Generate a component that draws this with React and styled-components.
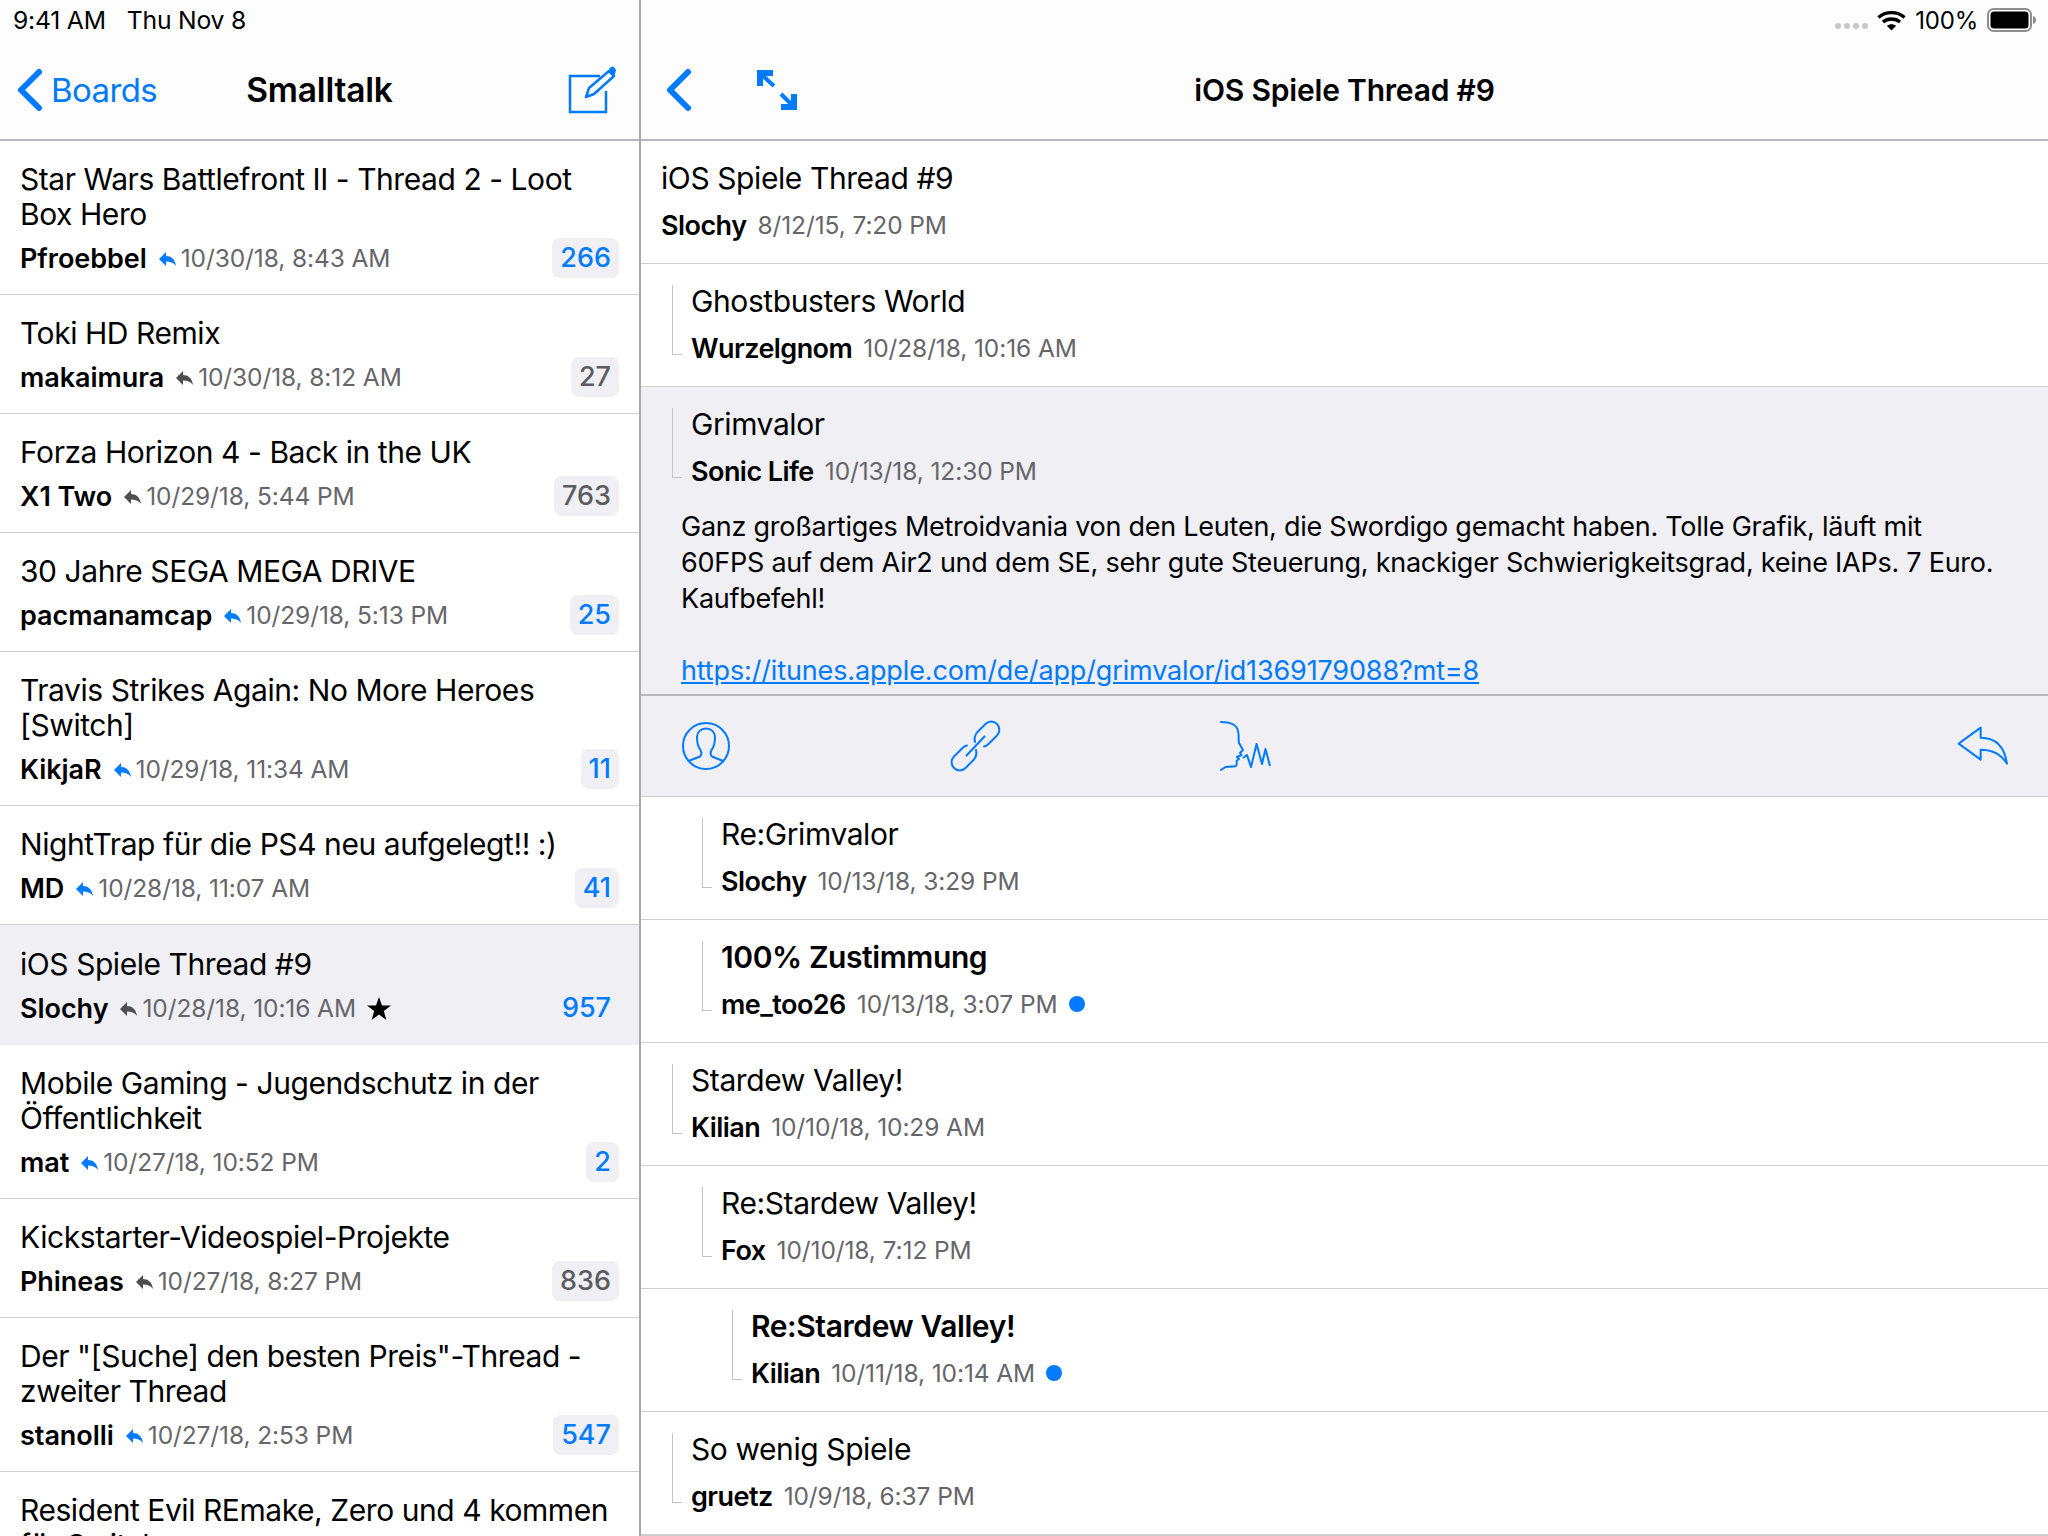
import styled, { createGlobalStyle } from "styled-components";

const BLUE = "#007aff";
const TINT = "#efeff4";
const LINE = "#c4c4c8";

const threads = [
  { title: "Star Wars Battlefront II - Thread 2 - Loot Box Hero", author: "Pfroebbel", date: "10/30/18, 8:43 AM", count: 266, unread: true },
  { title: "Toki HD Remix", author: "makaimura", date: "10/30/18, 8:12 AM", count: 27 },
  { title: "Forza Horizon 4 - Back in the UK", author: "X1 Two", date: "10/29/18, 5:44 PM", count: 763 },
  { title: "30 Jahre SEGA MEGA DRIVE", author: "pacmanamcap", date: "10/29/18, 5:13 PM", count: 25, unread: true },
  { title: "Travis Strikes Again: No More Heroes [Switch]", author: "KikjaR", date: "10/29/18, 11:34 AM", count: 11, unread: true },
  { title: "NightTrap für die PS4 neu aufgelegt!! :)", author: "MD", date: "10/28/18, 11:07 AM", count: 41, unread: true },
  { title: "iOS Spiele Thread #9", author: "Slochy", date: "10/28/18, 10:16 AM", count: 957, unread: true, active: true, starred: true },
  { title: "Mobile Gaming - Jugendschutz in der Öffentlichkeit", author: "mat", date: "10/27/18, 10:52 PM", count: 2, unread: true },
  { title: "Kickstarter-Videospiel-Projekte", author: "Phineas", date: "10/27/18, 8:27 PM", count: 836 },
  { title: 'Der "[Suche] den besten Preis"-Thread - zweiter Thread', author: "stanolli", date: "10/27/18, 2:53 PM", count: 547, unread: true },
  { title: "Resident Evil REmake, Zero und 4 kommen für Switch", author: "Oli", date: "10/27/18, 1:12 PM", count: 12 },
];

const postsAfter = [
  { title: "Re:Grimvalor", author: "Slochy", date: "10/13/18, 3:29 PM", level: 2 },
  { title: "100% Zustimmung", author: "me_too26", date: "10/13/18, 3:07 PM", level: 2, fresh: true },
  { title: "Stardew Valley!", author: "Kilian", date: "10/10/18, 10:29 AM", level: 1 },
  { title: "Re:Stardew Valley!", author: "Fox", date: "10/10/18, 7:12 PM", level: 2 },
  { title: "Re:Stardew Valley!", author: "Kilian", date: "10/11/18, 10:14 AM", level: 3, fresh: true },
  { title: "So wenig Spiele", author: "gruetz", date: "10/9/18, 6:37 PM", level: 1 },
];

const GlobalStyle = createGlobalStyle`
  html, body {
    margin: 0;
    background: #fff;
  }
  body {
    font-family: Inter, "Liberation Sans", sans-serif;
    color: #000;
  }
`;

const Screen = styled.div`
  display: grid;
  grid-template-columns: 640px 1fr;
  width: 2048px;
  height: 1536px;
  overflow: hidden;
`;

const Sidebar = styled.aside`
  border-right: 2px solid #a9a9ad;
  height: 1536px;
  overflow: hidden;
  box-sizing: content-box;
  width: 639px;
`;

const Detail = styled.main`
  height: 1536px;
  overflow: hidden;
  margin-left: 1px;
`;

const Header = styled.header`
  height: 139px;
  border-bottom: 2px solid #b8b8bc;
  background: #fdfdfd;
`;

const StatusBar = styled.div`
  display: flex;
  align-items: center;
  justify-content: ${(props) => (props.end ? "flex-end" : "flex-start")};
  gap: 21px;
  height: 40px;
  padding: 0 11px 0 13px;
  font-size: 24.7px;
  letter-spacing: -0.2px;
`;

const StatusRight = styled.div`
  display: flex;
  align-items: center;
  gap: 9px;
  font-size: 24px;
`;

const SignalDots = styled.div`
  display: flex;
  gap: 3px;
  margin: 12px 0 0;
  span {
    width: 6px;
    height: 6px;
    border-radius: 50%;
    background: #c8c8c8;
  }
`;

const NavBar = styled.div`
  display: grid;
  grid-template-columns: 1fr auto 1fr;
  align-items: center;
  height: 99px;
  padding: ${(props) => props.padding};
`;

const NavTitle = styled.div`
  font-size: ${(props) => props.size}px;
  font-weight: 600;
  letter-spacing: -0.2px;
`;

const NavGroup = styled.div`
  display: flex;
  align-items: center;
  gap: ${(props) => props.gap || 0}px;
  justify-content: ${(props) => (props.end ? "flex-end" : "flex-start")};
  padding-right: ${(props) => (props.end ? 5 : 0)}px;
`;

const BackLabel = styled.span`
  color: ${BLUE};
  font-size: 33px;
  letter-spacing: -0.6px;
`;

const ThreadRow = styled.div`
  padding: ${(props) => (props.active ? 22 : 21)}px 20px 16px 20px;
  border-bottom: 2px solid ${(props) => (props.active ? TINT : "#cfcfd3")};
  background: ${(props) => (props.active ? TINT : "#fff")};
  margin-top: ${(props) => (props.active ? -1 : 0)}px;
  margin-bottom: -1px;
`;

const ThreadTitle = styled.div`
  font-size: 30px;
  line-height: 35px;
  letter-spacing: -0.44px;
`;

const MetaRow = styled.div`
  display: flex;
  align-items: center;
  margin-top: 6px;
  height: 40px;
`;

const Author = styled.span`
  font-size: 27px;
  font-weight: 600;
  letter-spacing: ${(props) => (props.tight ? -0.55 : -0.05)}px;
`;

const DateText = styled.span`
  font-size: 24.5px;
  color: #66666a;
  letter-spacing: -0.1px;
`;

const ReplyMark = styled.svg`
  width: 17px;
  height: 14px;
  margin: 2px 5px 0 12px;
  fill: ${(props) => (props.unread ? BLUE : "#4f4f52")};
`;

const Star = styled.svg`
  width: 24px;
  height: 23px;
  margin-left: 11px;
`;

const Badge = styled.span`
  margin-left: auto;
  min-width: 16px;
  height: 40px;
  line-height: 40px;
  padding: 0 8px;
  text-align: center;
  border-radius: 8px;
  font-size: 27px;
  font-weight: 500;
  background: ${(props) => (props.active ? "transparent" : TINT)};
  color: ${(props) => (props.unread ? BLUE : "#5c5c60")};
`;

const PostRow = styled.section`
  border-bottom: 2px solid #cfcfd3;
  background: ${(props) => (props.active ? TINT : "#fff")};
  margin-bottom: -1px;
`;

const PostHead = styled.div`
  display: flex;
  padding: 20px 20px 21px ${(props) => (props.level ? 1 + props.level * 30 : 20)}px;
`;

const Connector = styled.div`
  flex: none;
  width: 10px;
  height: 70px;
  margin: 1px 9px 0 0;
  border-left: 1px solid ${LINE};
  border-bottom: 1px solid ${LINE};
  box-sizing: border-box;
`;

const PostTitle = styled.div`
  font-size: 30px;
  line-height: 35px;
  font-weight: ${(props) => (props.fresh ? 600 : 400)};
  letter-spacing: -0.41px;
`;

const PostMeta = styled.div`
  display: flex;
  align-items: center;
  gap: 11px;
  height: 34px;
  margin-top: 12px;
`;

const FreshDot = styled.span`
  width: 16px;
  height: 16px;
  border-radius: 50%;
  background: ${BLUE};
`;

const PostBody = styled.div`
  padding: 0 40px 5px 40px;
  font-size: 27px;
  line-height: 36px;
  letter-spacing: -0.25px;
  a {
    color: ${BLUE};
    letter-spacing: -0.14px;
  }
`;

const ActionBar = styled.div`
  display: flex;
  align-items: center;
  height: 100px;
  padding: 0 40px 0 41px;
  border-top: 2px solid #b8b8bc;
  background: ${TINT};
`;

const ActionSlot = styled.div`
  display: flex;
  width: ${(props) => props.width}px;
  margin-left: ${(props) => (props.push ? "auto" : 0)};
`;

const IconStroke = styled.svg`
  fill: none;
  stroke: ${BLUE};
  stroke-width: ${(props) => props.weight || 2}px;
  stroke-linecap: round;
  stroke-linejoin: round;
  overflow: visible;
`;

const Chevron = () => (
  <IconStroke width="24" height="42" viewBox="0 0 24 42" weight={6}>
    <path d="M21 3 L3 21 L21 39" />
  </IconStroke>
);

const ComposeIcon = () => (
  <IconStroke width="47" height="46" viewBox="0 0 47 46">
    <path d="M37 24 V45 H1 V9 H31" strokeLinecap="butt" strokeLinejoin="miter" strokeWidth="2.5" />
    <path d="M17 30 L20 21 L40 4 L45 9 L25 27 Z" strokeWidth="2.5" />
    <path d="M41 2 L44 0.5 L46 3 L45 7 Z" fill={BLUE} />
  </IconStroke>
);

const ExpandIcon = () => (
  <svg width="40" height="40" viewBox="0 0 40 40" fill={BLUE}>
    <path d="M0 0 H16 V6 H6 V16 H0 Z" />
    <path d="M40 40 H24 V34 H34 V24 H40 Z" />
    <path d="M5 5 L17 16" stroke={BLUE} strokeWidth="4" />
    <path d="M24 24 L35 35" stroke={BLUE} strokeWidth="4" />
  </svg>
);

const ProfileIcon = () => (
  <IconStroke width="48" height="48" viewBox="0 0 48 48">
    <circle cx="24" cy="24" r="23" />
    <path d="M6.5 39 L18 34.5 C19.5 33 19.5 30 18.5 28 C16 25 15 21 15 15 C15 10 19 6.5 24 6.5 C29 6.5 33 10 33 15 C33 21 32 25 29.5 28 C28.5 30 28.5 33 30 34.5 L41 39" />
  </IconStroke>
);

const LinkIcon = () => (
  <IconStroke width="49" height="50" viewBox="0 0 49 50">
    <path d="M24 21 C23 17 24 14 26 11.5 L34.5 3 A8 8 0 0 1 46 14.5 L37.5 23 C36 24.5 35 25 33 25.5" />
    <path d="M24 21 C23 17 24 14 26 11.5 L34.5 3 A8 8 0 0 1 46 14.5 L37.5 23 C36 24.5 35 25 33 25.5" transform="rotate(180 24.5 25)" />
    <path d="M33.5 15.5 L15.5 34.5" />
  </IconStroke>
);

const SpeechIcon = () => (
  <IconStroke width="50" height="50" viewBox="0 0 50 50">
    <path d="M1 1 C10 1 17 4 18 10 C19.5 15 18 18 19 22 L23 29 L20 32 L21.5 34 L17 36 L19 38 L16.5 40 C17 44 17 46 12 45.5 L5.5 46 L1 49" />
    <path d="M23 37 L27 34 L31 46 L36.6 23 L42 43 L45.5 28 L50 45" strokeLinecap="butt" />
  </IconStroke>
);

const ReplyIcon = () => (
  <IconStroke width="50" height="38" viewBox="175 108 150 114">
    <path d="M177 158 L243 110 V140 C290 140 315 170 322 218 C305 190 280 176 243 176 V206 Z" strokeWidth="6" />
  </IconStroke>
);

const WifiIcon = () => (
  <svg width="29" height="21" viewBox="0 0 29 21" fill="none" stroke="#000" strokeWidth="3.4">
    <path d="M1.5 7.5 C8.5 1 20.5 1 27.5 7.5" />
    <path d="M6 12 C10.5 8 18.5 8 23 12" />
    <path d="M14.5 20.5 L9.8 15.8 C12.5 13.6 16.5 13.6 19.2 15.8 Z" fill="#000" stroke="none" />
  </svg>
);

const BatteryIcon = () => (
  <svg width="50" height="24" viewBox="0 0 50 24">
    <rect x="1" y="1" width="43" height="22" rx="5.5" fill="none" stroke="#8e8e8e" strokeWidth="2" />
    <rect x="3.5" y="3.5" width="38" height="17" rx="3.5" fill="#000" />
    <path d="M46 8 C48 8.5 49 10 49 12 C49 14 48 15.5 46 16 Z" fill="#8e8e8e" />
  </svg>
);

function Thread({ item }) {
  return (
    <ThreadRow active={item.active}>
      <ThreadTitle>{item.title}</ThreadTitle>
      <MetaRow>
        <Author>{item.author}</Author>
        <ReplyMark unread={item.unread && !item.active} viewBox="0 0 17 14">
          <path d="M0 7 L7 0 V4 C12 4 16 7 17 14 C14.5 10.5 11 9.5 7 9.5 V14 Z" />
        </ReplyMark>
        <DateText>{item.date}</DateText>
        {item.starred && (
          <Star viewBox="0 0 24 23">
            <path d="M12 0 L15 8.5 H24 L16.8 14 L19.4 23 L12 17.6 L4.6 23 L7.2 14 L0 8.5 H9 Z" />
          </Star>
        )}
        <Badge active={item.active} unread={item.unread}>{item.count}</Badge>
      </MetaRow>
    </ThreadRow>
  );
}

function Post({ post, active, children }) {
  return (
    <PostRow active={active}>
      <PostHead level={post.level}>
        {post.level > 0 && <Connector />}
        <div>
          <PostTitle fresh={post.fresh}>{post.title}</PostTitle>
          <PostMeta>
            <Author tight>{post.author}</Author>
            <DateText>{post.date}</DateText>
            {post.fresh && <FreshDot />}
          </PostMeta>
        </div>
      </PostHead>
      {children}
    </PostRow>
  );
}

export default function App() {
  return (
    <Screen>
      <GlobalStyle />
      <Sidebar>
        <Header>
          <StatusBar>
            <span>9:41 AM</span>
            <span>Thu Nov 8</span>
          </StatusBar>
          <NavBar padding="0 18px">
            <NavGroup gap={9}>
              <Chevron />
              <BackLabel>Boards</BackLabel>
            </NavGroup>
            <NavTitle size={33.5}>Smalltalk</NavTitle>
            <NavGroup end>
              <ComposeIcon />
            </NavGroup>
          </NavBar>
        </Header>
        {threads.map((item) => (
          <Thread key={item.title} item={item} />
        ))}
      </Sidebar>
      <Detail>
        <Header>
          <StatusBar end>
            <StatusRight>
              <SignalDots>
                <span />
                <span />
                <span />
                <span />
              </SignalDots>
              <WifiIcon />
              <span>100%</span>
              <BatteryIcon />
            </StatusRight>
          </StatusBar>
          <NavBar padding="0 26px">
            <NavGroup gap={66}>
              <Chevron />
              <ExpandIcon />
            </NavGroup>
            <NavTitle size={30}>iOS Spiele Thread #9</NavTitle>
            <span />
          </NavBar>
        </Header>
        <Post post={{ title: "iOS Spiele Thread #9", author: "Slochy", date: "8/12/15, 7:20 PM", level: 0 }} />
        <Post post={{ title: "Ghostbusters World", author: "Wurzelgnom", date: "10/28/18, 10:16 AM", level: 1 }} />
        <Post active post={{ title: "Grimvalor", author: "Sonic Life", date: "10/13/18, 12:30 PM", level: 1 }}>
          <PostBody>
            Ganz großartiges Metroidvania von den Leuten, die Swordigo gemacht haben. Tolle Grafik, läuft mit 60FPS auf dem Air2 und dem SE, sehr gute Steuerung, knackiger Schwierigkeitsgrad, keine IAPs. 7 Euro. Kaufbefehl!
            <br />
            <br />
            <a href="#grimvalor">https://itunes.apple.com/de/app/grimvalor/id1369179088?mt=8</a>
          </PostBody>
          <ActionBar>
            <ActionSlot width={269}><ProfileIcon /></ActionSlot>
            <ActionSlot width={269}><LinkIcon /></ActionSlot>
            <ActionSlot width={60}><SpeechIcon /></ActionSlot>
            <ActionSlot width={50} push><ReplyIcon /></ActionSlot>
          </ActionBar>
        </Post>
        {postsAfter.map((post, i) => (
          <Post key={i} post={post} />
        ))}
      </Detail>
    </Screen>
  );
}
